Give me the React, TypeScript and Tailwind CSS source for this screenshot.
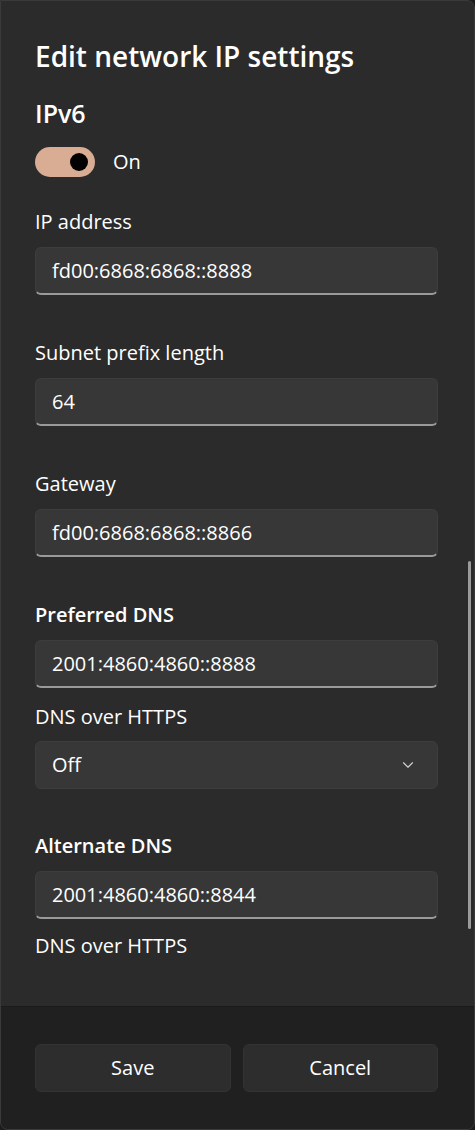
import React from 'react';
import { ChevronDown } from 'lucide-react';

const font = { fontFamily: '"Open Sans", "Noto Sans", sans-serif' };

const Label = ({ text, bold = false, className = '' }: { text: string; bold?: boolean; className?: string }) => (
  <div className={`h-[28px] leading-[28px] text-[20px] text-white ${bold ? 'font-semibold' : ''} ${className}`}>{text}</div>
);

const Field = ({ value }: { value: string }) => (
  <div className="mt-[11px] h-[48px] rounded-[6px] bg-[#373737] border border-[#3d3d3d] border-b-2 border-b-[#9a9a9a] flex items-center px-[16px] text-[20px] text-white">
    {value}
  </div>
);

export default function App() {
  return (
    <div style={font} className="w-[475px] h-[1130px] bg-[#1c1c1c]">
      <div className="relative w-full h-full flex flex-col rounded-b-[8px] rounded-tr-[8px] overflow-hidden border border-[#3a3a3a] bg-[#2b2b2b]">
        {/* scrollable content */}
        <div className="flex-1 pl-[34px] pr-[36px] pt-[37px]">
          <h1 className="h-[36px] leading-[36px] text-[28px] font-semibold text-white">Edit network IP settings</h1>
          <h2 className="mt-[23px] h-[32px] leading-[32px] text-[25px] font-semibold text-white">IPv6</h2>

          <div className="mt-[18px] flex items-center gap-[18px]">
            <div className="w-[60px] h-[30px] rounded-full bg-[#d9ad94] flex items-center justify-end pr-[7px]">
              <div className="w-[18px] h-[18px] rounded-full bg-black" />
            </div>
            <span className="text-[20px] text-white">On</span>
          </div>

          <Label text="IP address" className="mt-[31px]" />
          <Field value="fd00:6868:6868::8888" />

          <Label text="Subnet prefix length" className="mt-[44px]" />
          <Field value="64" />

          <Label text="Gateway" className="mt-[44px]" />
          <Field value="fd00:6868:6868::8866" />

          <Label text="Preferred DNS" bold className="mt-[44px]" />
          <Field value="2001:4860:4860::8888" />

          <Label text="DNS over HTTPS" className="mt-[15px]" />
          <div className="mt-[10px] h-[48px] rounded-[6px] bg-[#373737] border border-[#3d3d3d] flex items-center justify-between pl-[16px] pr-[20px] text-[20px] text-white">
            <span>Off</span>
            <ChevronDown className="w-[18px] h-[18px] text-[#d0d0d0]" strokeWidth={1.5} />
          </div>

          <Label text="Alternate DNS" bold className="mt-[43px]" />
          <Field value="2001:4860:4860::8844" />

          <Label text="DNS over HTTPS" className="mt-[13px]" />
        </div>

        {/* scrollbar */}
        <div className="absolute left-[467px] top-[560px] w-[3px] h-[368px] rounded-full bg-[#9b9b9b]" />

        {/* footer */}
        <div className="h-[123px] shrink-0 bg-[#202020] border-t border-[#1a1a1a] flex gap-[12px] pl-[34px] pr-[36px] pt-[37px]">
          <button className="flex-1 h-[48px] rounded-[6px] bg-[#2d2d2d] border border-[#333333] text-[20px] text-white">Save</button>
          <button className="flex-1 h-[48px] rounded-[6px] bg-[#2d2d2d] border border-[#333333] text-[20px] text-white">Cancel</button>
        </div>
      </div>
    </div>
  );
}
